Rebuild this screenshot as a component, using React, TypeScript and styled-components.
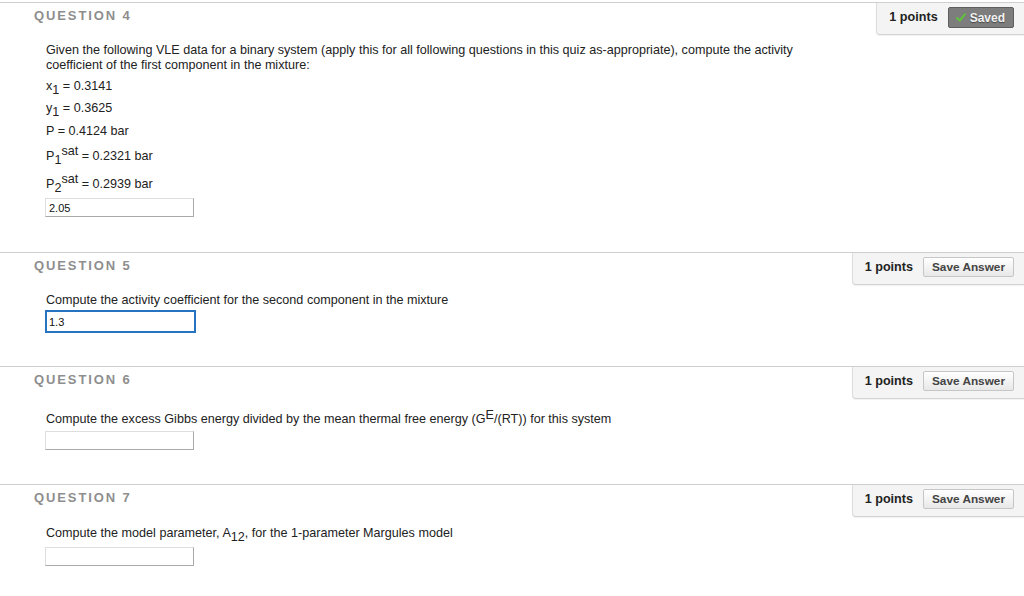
import styled, { createGlobalStyle, css } from "styled-components";


const GlobalStyle = createGlobalStyle`
	html, body {
		margin: 0;
		padding: 0;
		background: #ffffff;
	}

	body {
		font-family: "Liberation Sans", Arial, sans-serif;
		font-size: 12.6px;
		color: #222;
	}
`;


const Page = styled.div`
	padding-top: 2px;
	width: 1024px;
`;


const QuestionSC = styled.section<{ $bottom: number }>`
	border-top: 1px solid #cfcfcf;
	padding-bottom: ${p => p.$bottom}px;
`;


const Header = styled.div`
	display: flex;
	justify-content: space-between;
	align-items: flex-start;
	height: 32px;
`;


const Title = styled.h3`
	margin: 0;
	padding: 5px 0 0 34px;
	font-size: 13px;
	line-height: 15px;
	font-weight: bold;
	letter-spacing: 1.9px;
	color: #8e8e8e;
`;


const PointsBox = styled.div`
	display: flex;
	align-items: flex-start;
	gap: 10px;
	box-sizing: border-box;
	height: 32px;
	padding: 3px 10px 0 12px;
	background: #f4f4f4;
	border-left: 1px solid #dcdcdc;
	border-bottom: 1px solid #d4d4d4;
	border-bottom-left-radius: 4px;
	box-shadow: 0 1px 1px rgba(0, 0, 0, 0.06);

	.points {
		font-weight: bold;
		font-size: 12.6px;
		line-height: 22px;
		color: #222;
	}
`;


const buttonBase = css`
	display: inline-flex;
	align-items: center;
	height: 20px;
	margin-top: 1px;
	box-sizing: border-box;
	font-family: "Liberation Sans", Arial, sans-serif;
	font-weight: bold;
	border-radius: 2px;
	cursor: pointer;
`;


const SaveButton = styled.button`
	${buttonBase};
	padding: 0 8px;
	font-size: 11.8px;
	color: #444;
	background: linear-gradient(#ffffff, #e8e8e8);
	border: 1px solid #c6c6c6;
`;


const SavedButton = styled.button`
	${buttonBase};
	height: 21px;
	padding: 0 8px 0 7px;
	gap: 4px;
	font-size: 12px;
	color: #f2f2f2;
	background: #7d7d7d;
	border: 1px solid #5e5e5e;
	text-shadow: 0 1px 1px rgba(0, 0, 0, 0.45);
`;


const Body = styled.div`
	padding-left: 46px;
	padding-right: 190px;
	line-height: 15px;
	color: #222;
`;


const Para = styled.p<{ $top: number }>`
	margin: ${p => p.$top}px 0 0;
`;


const Sub = styled.sub`
	font-size: 1em;
	vertical-align: -4px;
	line-height: 0;
`;


const Sup = styled.sup`
	font-size: 1em;
	vertical-align: 5px;
	line-height: 0;
`;


const SmallSup = styled.sup`
	font-size: 1em;
	vertical-align: 4px;
	line-height: 0;
`;


const AnswerInput = styled.input<{ $top: number; $focused?: boolean }>`
	display: block;
	box-sizing: border-box;
	width: 149px;
	height: 19px;
	margin: ${p => p.$top}px 0 0 -1px;
	padding: 0 3px;
	font-family: "Liberation Sans", Arial, sans-serif;
	font-size: 11px;
	color: #111;
	background: #fff;
	border: 1px solid #dedede;
	border-right-color: #a9a9a9;
	border-bottom-color: #a9a9a9;
	outline: none;

	${p => p.$focused && css`
		width: 151px;
		height: 23px;
		border: 2px solid #2673c2;
		padding: 0 2px;
	`}
`;


function Points(props: { saved?: boolean })
{
	return (
		<PointsBox>
			<span className="points">1 points</span>
			{props.saved ? (
				<SavedButton>
					<svg width="10" height="9" viewBox="0 0 10 9">
						<path d="M1 5 L3.8 7.6 L9 1.2" fill="none" stroke="#5ec43a" strokeWidth="2" strokeLinecap="round" strokeLinejoin="round" />
					</svg>
					Saved
				</SavedButton>
			) : (
				<SaveButton>Save Answer</SaveButton>
			)}
		</PointsBox>
	);
}


export default function App()
{
	return (
		<Page>
			<GlobalStyle />

			<QuestionSC $bottom={35}>
				<Header>
					<Title>QUESTION 4</Title>
					<Points saved />
				</Header>
				<Body>
					<Para $top={8}>
						Given the following VLE data for a binary system (apply this for all following questions in this quiz as-appropriate), compute the activity coefficient of the first component in the mixture:
					</Para>
					<Para $top={6}>x<Sub>1</Sub> = 0.3141</Para>
					<Para $top={7}>y<Sub>1</Sub> = 0.3625</Para>
					<Para $top={8}>P = 0.4124 bar</Para>
					<Para $top={10}>P<Sub>1</Sub><Sup>sat</Sup> = 0.2321 bar</Para>
					<Para $top={13}>P<Sub>2</Sub><Sup>sat</Sup> = 0.2939 bar</Para>
					<AnswerInput $top={6} defaultValue="2.05" />
				</Body>
			</QuestionSC>

			<QuestionSC $bottom={33}>
				<Header>
					<Title>QUESTION 5</Title>
					<Points />
				</Header>
				<Body>
					<Para $top={8}>Compute the activity coefficient for the second component in the mixture</Para>
					<AnswerInput $top={2} $focused defaultValue="1.3" />
				</Body>
			</QuestionSC>

			<QuestionSC $bottom={34}>
				<Header>
					<Title>QUESTION 6</Title>
					<Points />
				</Header>
				<Body>
					<Para $top={13}>
						Compute the excess Gibbs energy divided by the mean thermal free energy (G<SmallSup>E</SmallSup>/(RT)) for this system
					</Para>
					<AnswerInput $top={4} />
				</Body>
			</QuestionSC>

			<QuestionSC $bottom={30}>
				<Header>
					<Title>QUESTION 7</Title>
					<Points />
				</Header>
				<Body>
					<Para $top={9}>Compute the model parameter, A<Sub>12</Sub>, for the 1-parameter Margules model</Para>
					<AnswerInput $top={6} />
				</Body>
			</QuestionSC>
		</Page>
	);
}
